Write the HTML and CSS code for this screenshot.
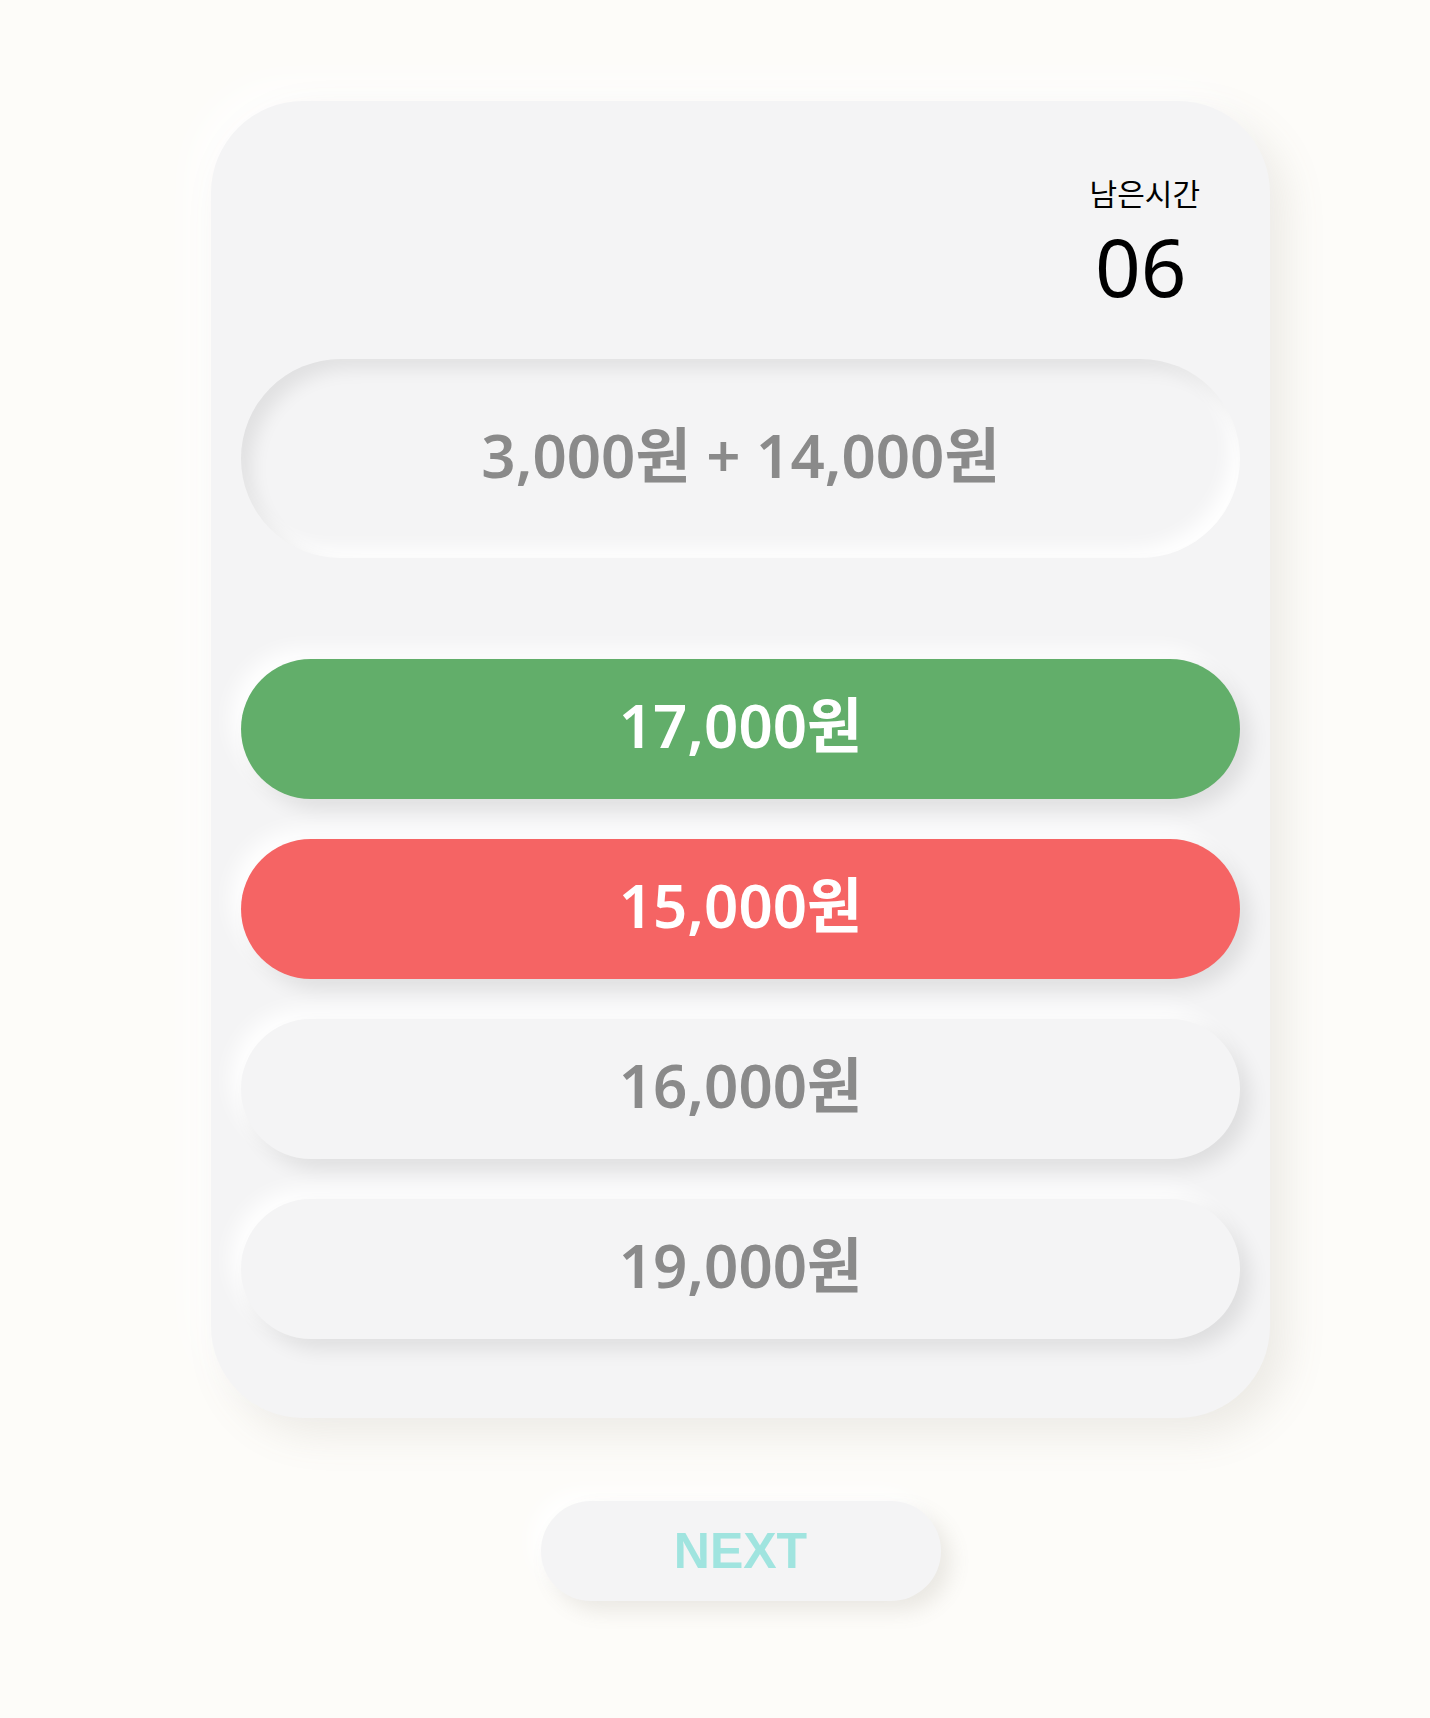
FILE: index.html
```html
<!DOCTYPE html>
<html lang="ko">
<head>
<meta charset="utf-8">
<title>Quiz</title>
<link rel="stylesheet" href="styles.css">
</head>
<body>
<main class="page">
  <section class="card">
    <header class="card-head">
      <div class="timer">
        <div class="timer-label">남은시간</div>
        <div class="timer-value">06</div>
      </div>
    </header>
    <div class="question">3,000원 + 14,000원</div>
    <ul class="options">
      <li class="option option-correct">17,000원</li>
      <li class="option option-wrong">15,000원</li>
      <li class="option">16,000원</li>
      <li class="option">19,000원</li>
    </ul>
  </section>
  <button class="next" type="button">NEXT</button>
</main>
</body>
</html>
```
FILE: styles.css
```css
* { box-sizing: border-box; }
html, body { margin: 0; padding: 0; }
body {
  background: #fdfcf9;
  font-family: "Noto Sans", "Noto Sans CJK KR", sans-serif;
  width: 1430px;
  min-height: 1718px;
}
.page {
  width: 1059px;
  margin-left: 211px;
  padding-top: 101px;
  display: flex;
  flex-direction: column;
  align-items: center;
}
.card {
  width: 1059px;
  background: #f4f4f5;
  border-radius: 92px;
  padding: 0 30px 79px;
  box-shadow: 16px 16px 40px rgba(120, 115, 100, 0.13), -16px -16px 40px rgba(255, 255, 255, 0.9);
}
.card-head {
  height: 258px;
  display: flex;
  justify-content: flex-end;
  padding-top: 69px;
  padding-right: 40px;
}
.timer {
  display: flex;
  flex-direction: column;
  align-items: center;
  color: #000;
}
.timer-label {
  font-family: "Noto Sans CJK KR", sans-serif;
  font-size: 30px;
  line-height: 44px;
  font-weight: 400;
}
.timer-value {
  font-family: "Noto Sans", sans-serif;
  font-size: 80px;
  line-height: 104px;
  margin-right: 8px;
}
.question {
  height: 199px;
  border-radius: 100px;
  background: #f4f4f5;
  box-shadow: inset 10px 10px 18px rgba(0, 0, 0, 0.08), inset -10px -10px 18px rgba(255, 255, 255, 0.95);
  display: flex;
  align-items: center;
  justify-content: center;
  font-size: 60px;
  font-weight: 600;
  color: #8a8a8a;
  padding-bottom: 13px;
}
.options {
  list-style: none;
  margin: 101px 0 0;
  padding: 0;
  display: flex;
  flex-direction: column;
  gap: 40px;
}
.option {
  height: 140px;
  border-radius: 70px;
  background: #f4f4f5;
  box-shadow: 10px 10px 20px rgba(0, 0, 0, 0.09), -10px -10px 20px rgba(255, 255, 255, 0.95);
  display: flex;
  align-items: center;
  justify-content: center;
  font-size: 60px;
  font-weight: 600;
  color: #8a8a8a;
  padding-bottom: 14px;
}
.option-correct {
  background: #62ae6a;
  color: #fff;
}
.option-wrong {
  background: #f56464;
  color: #fff;
}
.next {
  margin-top: 83px;
  width: 400px;
  height: 100px;
  border: 0;
  border-radius: 50px;
  background: #f4f4f5;
  box-shadow: 10px 10px 20px rgba(120, 115, 100, 0.14), -10px -10px 20px rgba(255, 255, 255, 0.95);
  font-family: "Liberation Sans", Arial, sans-serif;
  font-weight: 700;
  font-size: 50px;
  color: #a0e4df;
  padding: 0;
}
```
